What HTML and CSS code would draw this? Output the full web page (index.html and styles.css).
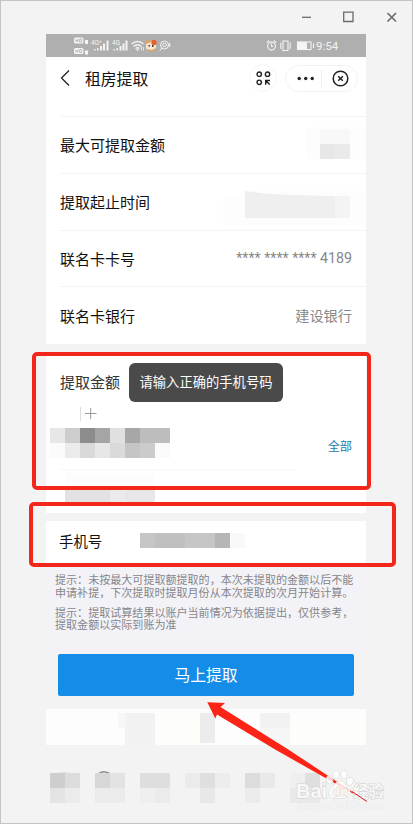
FILE: index.html
```html
<!doctype html>
<html lang="zh-CN">
 <head>
  <meta charset="UTF-8">
  <title>租房提取</title>
  <link rel="stylesheet" href="styles.css">
 </head>
 <body>
	<div id="window">
		<!-- 窗口按钮 -->
		<div class="win_bar">
			<svg width="100" height="14" viewBox="0 0 100 14" fill="none" stroke="#6a6a6a" stroke-width="1.3">
				<path d="M2 7.3h9"/>
				<path d="M43.700 2.200h9.300v9.300h-9.300z"/>
				<path d="M87.500 3l8.500 8.500M96 3l-8.500 8.500" stroke-width="1.6"/>
			</svg>
		</div>

		<div id="phone">
			<!-- 状态栏 -->
			<div class="status">
				<svg class="signal" width="98" height="23" viewBox="0 0 98 23" fill="#f4f4f4">
					<rect x="0" y="3.500" width="9.500" height="6" rx="1.500"/>
					<rect x="0" y="14" width="9.500" height="6" rx="1.500"/>
					<g fill="none" stroke="#b0b0b0" stroke-width=".8"><path d="M2 5v3M4 5v3M2 6.500h2M5.700 5v3h2v-3zM2 15.500v3M4 15.500v3M2 17h2M5.700 15.500v3h2v-3z"/></g>
					<path d="M11 6h3v4h-3zM11 16.500h3v4h-3z"/>
					<text x="17" y="11" font-size="6.500">4G⁺</text>
					<text x="38" y="11" font-size="6.500">4G</text>
					<path d="M20 15h1.500v1.500h-1.500zM23 14h1.500v2.500h-1.500zM26 12h2v4.500h-2zM29 9.500h2v7h-2zM32.500 6.500h2v10h-2z"/>
					<path d="M39.500 15h1.500v1.500h-1.500zM42.500 14h1.500v2.500h-1.500zM45.500 12h2v4.500h-2zM48.500 9.500h2v7h-2zM51.500 6.500h2v10h-2z"/>
					<g fill="none" stroke="#f4f4f4" stroke-width="1.300"><path d="M57.500 10q6-5 12 0M59.500 12.500q4-3.500 8 0M61.500 14.500q2-1.500 4 0"/></g>
					<circle cx="63.500" cy="16" r="1"/>
					<path d="M67.500 13v3.500M69.500 13v3.500" stroke="#f4f4f4" stroke-width=".8"/>
					<path d="M72 7l3 1 3-1 4 2v6l-2 2h-6l-2-3z" fill="#f6e6d2"/>
					<path d="M72 6l2 1 3-1v2l-5 2zM73 15l5 1 4-2v3h-8z" fill="#e0a060"/>
					<circle cx="80" cy="8.500" r="2.700" fill="#e2612e"/>
					<path d="M74.500 11h1.500v1.500h-1.500zM78 11h1.500v2h-1.500z" fill="#55392a"/>
					<g fill="none" stroke="#f4f4f4" stroke-width="1"><circle cx="90.500" cy="11" r="4"/><circle cx="90.500" cy="11" r="1.800"/><path d="M88 14l-2 2.500M95.700 9v4"/></g>
				</svg>
				<svg width="50" height="23" viewBox="0 0 50 23" fill="none" stroke="#f4f4f4" stroke-width="1.100">
					<circle cx="5.500" cy="12" r="3.900"/>
					<path d="M5.500 9.500v2.800h2M.7 8.700l2.500-2.200M10.300 8.700l-2.500-2.200"/>
					<path d="M17 7h5v9.500h-5zM14.800 8.500v6.500M24.200 8.500v6.500"/>
					<rect x="31.500" y="8" width="13.500" height="7.500"/>
					<path d="M32 8.500h8.500v6.500h-8.500z" fill="#f4f4f4"/>
					<path d="M47.500 9.500v4.500"/>
				</svg>
				<span class="time">9:54</span>
			</div>

			<!-- 标题栏 -->
			<div class="nav">
				<svg class="back" width="10" height="18" viewBox="0 0 10 18" fill="none" stroke="#222" stroke-width="1.300"><path d="M9 1.500l-7.500 7.500 7.500 7.500"/></svg>
				<h1>租房提取</h1>
				<div class="round">
					<svg width="15" height="15" viewBox="0 0 15 15" fill="none" stroke="#222" stroke-width="1.400">
						<circle cx="3.200" cy="3.200" r="2.200"/><circle cx="11.500" cy="3.200" r="2.200"/><circle cx="3.200" cy="11.300" r="2.200"/>
						<path d="M9.700 13.800v-4.300h4.300M9.700 9.500l4 4"/>
					</svg>
				</div>
				<div class="capsule">
					<svg width="18" height="5" viewBox="0 0 18 5" fill="#222"><circle cx="2.200" cy="2.500" r="1.700"/><circle cx="8.700" cy="2.500" r="1.700"/><circle cx="15.200" cy="2.500" r="1.700"/></svg>
					<i></i>
					<svg width="17" height="17" viewBox="0 0 17 17" fill="none" stroke="#222" stroke-width="1.500"><circle cx="8.500" cy="8.500" r="7.300"/><path d="M6.200 6.200l4.600 4.600M10.800 6.200l-4.600 4.600"/></svg>
				</div>
			</div>

			<!-- 提取信息 -->
			<div class="list">
				<div class="row"><span>最大可提取金额</span>
					<svg class="mask m_max" width="60" height="40"><path d="M0 6h60v32h-60z" fill="#fdfdfd"/><path d="M14 8h30v15h-30z" fill="#f8f8f8"/><path d="M14 23h30v15h-30z" fill="#eaeaea"/><path d="M14 23h15v15h-15z" fill="#e7e7e7"/></svg>
				</div>
				<div class="row"><span>提取起止时间</span>
					<svg class="mask m_date" width="142" height="46"><path d="M0 20l24-8h118v34h-142z" fill="#fdfdfd"/><path d="M22 12q30 5 105 5v22h-105z" fill="#efefef"/><path d="M112 17h15v22h-15z" fill="#f4f4f4"/></svg>
				</div>
				<div class="row"><span>联名卡卡号</span><em>**** **** **** 4189</em></div>
				<div class="row"><span>联名卡银行</span><em>建设银行</em></div>
			</div>

			<!-- 提取金额 -->
			<div class="amount">
				<div class="label">提取金额</div>
				<div class="all">全部</div>
				<svg class="mask m_amount" width="320" height="105">
					<g shape-rendering="crispEdges">
					<path d="M4 21h15v15h-15z" fill="#e7e7e7"/><path d="M19 21h15v15h-15z" fill="#cdcdcd"/>
					<path d="M34 21h15v15h-15z" fill="#8c8c8c"/><path d="M49 21h15v15h-15z" fill="#a5a5a5"/>
					<path d="M64 21h15v15h-15z" fill="#e0e0e0"/><path d="M79 21h15v15h-15z" fill="#a7a7a7"/>
					<path d="M94 21h30v15h-30z" fill="#bdbdbd"/>
					<path d="M4 36h15v15h-15z" fill="#fbfbfb"/><path d="M19 36h15v15h-15z" fill="#ebebeb"/>
					<path d="M34 36h15v15h-15z" fill="#d9d9d9"/><path d="M49 36h15v15h-15z" fill="#e7e7e7"/>
					<path d="M64 36h15v15h-15z" fill="#dadada"/><path d="M79 36h15v15h-15z" fill="#c5c5c5"/>
					<path d="M94 36h15v15h-15z" fill="#cbcbcb"/><path d="M109 36h15v15h-15z" fill="#fafafa"/>
					<path d="M19 66h90v15h-90z" fill="#fcfcfc"/>
					<path d="M19 81h45v14h-45z" fill="#e2e2e2"/><path d="M64 81h15v14h-15z" fill="#ebebeb"/>
					</g>
					<path d="M79 81h30v12q0 2-2 2h-28z" fill="#e7e7e7"/>
					<path d="M34.500 0v14" stroke="#ddd"/>
					<path d="M39 6.500h11.500M44.700 1v11" stroke="#999"/>
					<path d="M14 62.500h237" stroke="#f7f7f7"/>
				</svg>
			</div>

			<!-- 手机号 -->
			<div class="tel">
				<span>手机号</span>
				<svg width="106" height="15" shape-rendering="crispEdges"><path d="M0 0h75v15h-75z" fill="#c6c6c6"/><path d="M15 0h30v15h-30z" fill="#c0c0c0"/><path d="M75 0h15v15h-15z" fill="#b6b6b6"/><path d="M90 0h15v15h-15z" fill="#f9f9f9"/></svg>
			</div>

			<div class="tips">
				<p>提示：未按最大可提取额提取的，本次未提取的金额以后不能<br>申请补提，下次提取时提取月份从本次提取的次月开始计算。</p>
				<p>提示：提取试算结果以账户当前情况为依据提出，仅供参考，<br>提取金额以实际到账为准</p>
			</div>
			<button class="submit">马上提取</button>

			<svg class="foot" width="320" height="36" shape-rendering="crispEdges">
				<path d="M0 0h320v36h-320z" fill="#fdfdfd"/>
				<path d="M79 4h30v32h-30z" fill="#f2f2f3"/><path d="M72 4h7v15h-7z" fill="#f7f7f7"/>
				<path d="M109 5h45v29h-45z" fill="#fdfdfa"/>
				<path d="M154 4h15v30h-15z" fill="#ececec"/>
				<path d="M214 4h30v15h-30z" fill="#f2f2f2"/><path d="M214 19h30v16h-30z" fill="#f6f6f6"/>
				<path d="M244 9h76v26h-76z" fill="#fdfdfa"/>
			</svg>

			<!-- 桌面图标 -->
			<svg class="dock" width="320" height="34">
				<path d="M8 2.500q10-2 19 0zM50 2.500q8-4.500 16 0z" fill="#ccc"/>
				<path d="M54 1.500q4-2 9 .5" stroke="#777" fill="none"/>
				<g shape-rendering="crispEdges">
				<path d="M4 2h15v15h-15z" fill="#cecece"/><path d="M19 2h15v15h-15z" fill="#dcdcdc"/><path d="M4 17h15v15h-15z" fill="#e4e4e4"/><path d="M19 17h15v15h-15z" fill="#ebebeb"/>
				<path d="M49 2h15v15h-15z" fill="#d7d7d7"/><path d="M64 2h15v15h-15z" fill="#e3e3e3"/><path d="M49 17h30v15h-30z" fill="#ebebeb"/>
				<path d="M94 2h30v15h-30z" fill="#dedede"/><path d="M94 17h15v15h-15z" fill="#efefef"/><path d="M109 17h15v15h-15z" fill="#ebebeb"/>
				<path d="M139 2h15v15h-15z" fill="#ebebeb"/><path d="M154 2h15v15h-15z" fill="#dfdfdf"/><path d="M169 2h15v15h-15z" fill="#ededed"/><path d="M154 17h15v15h-15z" fill="#e8e8e8"/>
				<path d="M199 2h15v15h-15z" fill="#dcdcdc"/><path d="M214 2h15v15h-15z" fill="#e9e9e9"/><path d="M199 17h15v15h-15z" fill="#ebebeb"/>
				<path d="M244 2h15v15h-15z" fill="#efefef"/><path d="M259 2h15v15h-15z" fill="#dfdfdf"/><path d="M244 17h30v15h-30z" fill="#e9e9e9"/>
				</g>
			</svg>
		</div>

		<div class="toast">请输入正确的手机号码</div>

		<!-- 红框和箭头标注 -->
		<div class="box box1"></div>
		<div class="box box2"></div>
		<svg class="arrow" width="413" height="124" viewBox="0 700 413 124">
			<path d="M207.300 702.300L225 703l-4.500 4L288.300 749.500L367 801.500L276 750L217 714.500l-1.700 4z" fill="#fb2416"/>
			<g fill="#fff" fill-opacity=".8" stroke="#cfcfcf" stroke-width=".9" paint-order="stroke">
				<ellipse cx="329.500" cy="780" rx="3" ry="4" transform="rotate(-20 329.500 780)"/>
				<ellipse cx="336" cy="774.500" rx="3" ry="4"/>
				<ellipse cx="344" cy="774.500" rx="3" ry="4"/>
				<ellipse cx="350" cy="781.500" rx="3" ry="4" transform="rotate(20 350 781.500)"/>
				<path d="M340 781q4 0 6 5 5 3 4 8-1 4-5 4h-11q-5 0-5-5 0-4 5-7 2-5 6-5z"/>
				<text x="296" y="798" font-size="20" font-weight="bold" textLength="31" class="logo">Bai</text>
				<text x="332" y="796" font-size="13" font-weight="bold" class="logo">du</text>
				<text x="353" y="797" font-size="15.500" font-weight="bold">经验</text>
			</g>
			<path d="M352 791.500L367 801.500" stroke="#d2222a"/>
			<text x="297" y="809" font-size="10" textLength="86" class="logo" fill="#f8f8f8" stroke="#e2e2e2" stroke-width=".5" paint-order="stroke">jingyan.baidu.com</text>
		</svg>
	</div>
 </body>
</html>
```
FILE: styles.css
```css
* {
box-sizing: border-box;
}

body {
margin: 0;
font-family: Roboto, "Noto Sans CJK SC", sans-serif;
}

/* 窗口 */
#window {
position: relative;
width: 413px;
height: 824px;
border: solid 1px #c4c4c4;
background: #f3f3f3;
overflow: hidden;
}

.win_bar {
height: 33px;
padding: 9px 12px 0 0;
text-align: right;
line-height: 0;
}

#phone {
width: 320px;
margin-left: 45px;
}

#phone svg {
display: block;
flex: none;
}

/* 状态栏 */
.status {
display: flex;
height: 23px;
padding-left: 28px;
padding-right: 29px;
background: #afafaf;
color: #f4f4f4;
}

.signal {
margin-right: auto;
}

.time {
width: 21px;
font-size: 11.500px;
line-height: 24px;
white-space: nowrap;
}

/* 标题栏 */
.nav {
display: flex;
align-items: center;
height: 59px;
padding: 0 8px 17px 14px;
background: #fff;
}

h1 {
margin: 0 auto 0 15px;
font-size: 15.800px;
font-weight: 400;
color: #111;
}

.round {
display: flex;
align-items: center;
justify-content: center;
width: 28px;
height: 28px;
margin-right: 8px;
border: solid 1px #f6f6f6;
border-radius: 50%;
}

.capsule {
display: flex;
align-items: center;
width: 73px;
height: 27px;
padding-left: 11px;
border: solid 1px #f3f3f3;
border-radius: 14px;
}

.capsule i {
width: 1px;
height: 17px;
margin: 0 10px 0 6px;
background: #f0f0f0;
}

/* 列表 */
.list {
height: 228px;
padding-left: 14px;
background: #fff;
}

.row {
position: relative;
display: flex;
align-items: center;
justify-content: space-between;
height: 56.800px;
padding-right: 14px;
border-top: solid 1px #f4f4f4;
font-size: 15px;
color: #111;
}

.row em {
font-size: 14.200px;
font-style: normal;
color: #888;
}

.mask {
position: absolute;
}

.m_max {
right: 0;
top: 4px;
}

.m_date {
right: 1px;
top: 5px;
}

/* 提取金额 */
.amount {
position: relative;
height: 159px;
margin-top: 10px;
padding: 18px 14px 0;
background: #fff;
}

.label {
font-size: 15px;
line-height: 22px;
color: #333;
}

.all {
margin-top: 43px;
font-size: 12.200px;
line-height: 20px;
text-align: right;
color: #1c7da8;
}

.m_amount {
left: 0;
top: 53px;
}

/* 手机号 */
.tel {
display: flex;
align-items: center;
height: 43px;
margin-top: 8px;
padding: 0 0 5px 13px;
background: #fff;
font-size: 14.400px;
color: #111;
}

.tel svg {
margin-left: 38px;
}

/* 提示 */
.tips {
height: 90px;
padding: 11px 0 0 9px;
background: #f3f3f7;
font-size: 11.050px;
line-height: 12.600px;
color: #85858a;
white-space: nowrap;
}

.tips p {
margin: 0 0 7.600px;
}

.submit {
display: block;
width: 296px;
height: 42px;
margin: 0 0 0 12px;
padding: 0 0 2px;
border: 0;
border-radius: 2px;
background: #148de9;
font-family: inherit;
font-size: 15.800px;
color: #fff;
}

.submit + .foot {
margin-top: 13px;
}

.dock {
margin-top: 26px;
}

/* 浮层 */
.toast {
position: absolute;
left: 128px;
top: 362px;
width: 154px;
height: 39px;
border-radius: 6px;
background: #4a4a4a;
font-size: 13.300px;
line-height: 39px;
text-align: center;
color: #fff;
}

.box {
position: absolute;
border: solid 4px #f3261b;
border-radius: 5px;
}

.box1 {
left: 31px;
top: 351px;
width: 339px;
height: 138px;
}

.box2 {
left: 28px;
top: 501px;
width: 367px;
height: 65px;
}

.arrow {
position: absolute;
left: -1px;
top: 699px;
}

.logo {
font-family: "Liberation Sans", Arial, sans-serif;
}
```
